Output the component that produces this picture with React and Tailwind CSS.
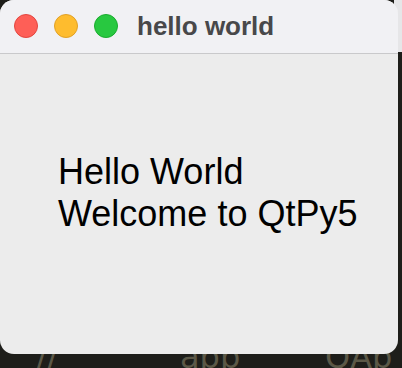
import React from "react";

const App = () => {
  return (
    <div className="relative w-[402px] h-[368px] overflow-hidden bg-[#1e1e1a]">
      {/* editor behind the window */}
      <div className="absolute right-0 top-0 w-[8px] h-[52px] bg-[#e6e6e8]" />
      <div
        className="absolute left-0 top-[341px] flex text-[32px] leading-none text-[#5b5847]"
        style={{ fontFamily: '"DejaVu Sans", sans-serif' }}
      >
        <span className="ml-[36px] w-[144px]">//</span>
        <span className="w-[145px]">app</span>
        <span>QAp</span>
      </div>

      {/* window */}
      <div
        className="relative z-10 w-[398px] h-[354px] rounded-[14px] bg-[#ececec] overflow-hidden flex flex-col"
        style={{ fontFamily: '"Liberation Sans", Arial, sans-serif' }}
      >
        <div className="h-[54px] shrink-0 bg-[#f1f1f4] border-b border-[#c9c9cb] flex items-center pl-[14px] pb-[2px]">
          <div className="flex gap-4">
            <span className="w-6 h-6 rounded-full bg-[#fe5f57] border border-[#e2463f]" />
            <span className="w-6 h-6 rounded-full bg-[#febc2e] border border-[#e0a026]" />
            <span className="w-6 h-6 rounded-full bg-[#28c840] border border-[#1aab2e]" />
          </div>
          <span className="ml-[19px] text-[26px] font-bold text-[#48484a] leading-none">
            hello world
          </span>
        </div>
        <div className="pl-[58px] pt-[97px] text-[36px] leading-[42px] text-black">
          <p>Hello World</p>
          <p>Welcome to QtPy5</p>
        </div>
      </div>
    </div>
  );
};

export default App;
